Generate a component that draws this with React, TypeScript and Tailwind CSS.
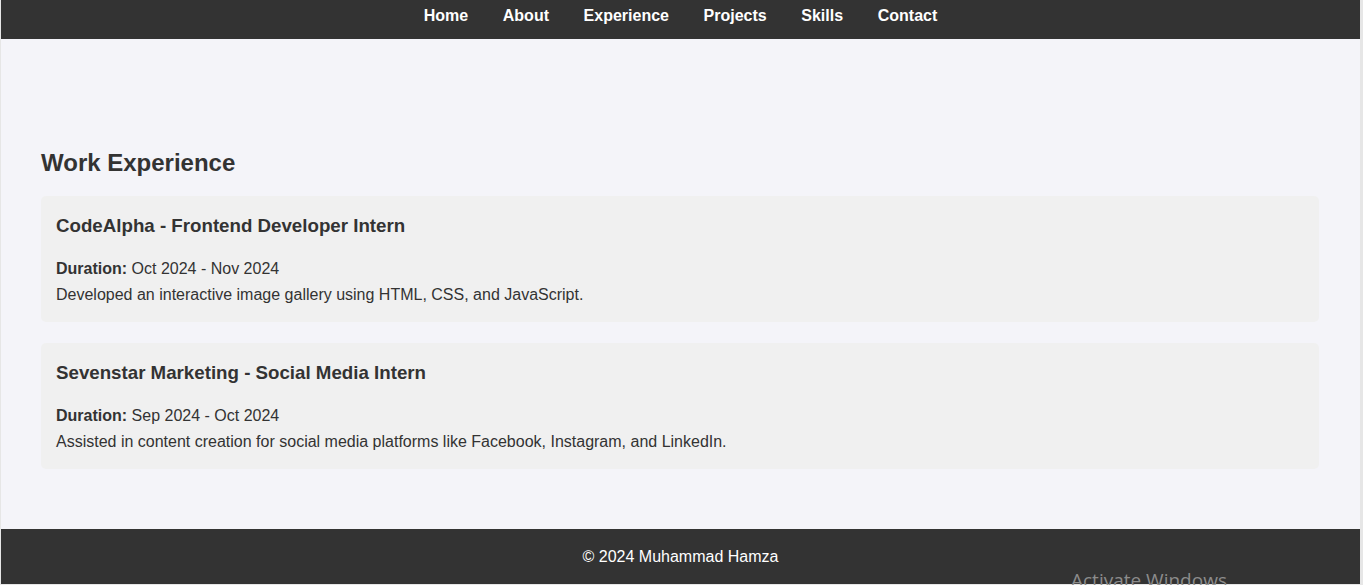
import React from "react";

const links = ["Home", "About", "Experience", "Projects", "Skills", "Contact"];

const jobs = [
  {
    title: "CodeAlpha - Frontend Developer Intern",
    duration: "Oct 2024 - Nov 2024",
    text: "Developed an interactive image gallery using HTML, CSS, and JavaScript.",
  },
  {
    title: "Sevenstar Marketing - Social Media Intern",
    duration: "Sep 2024 - Oct 2024",
    text: "Assisted in content creation for social media platforms like Facebook, Instagram, and LinkedIn.",
  },
];

const App = () => {
  return (
    <div className="w-[1363px] h-[585px] bg-[#e6e6e6] overflow-hidden font-['Liberation_Sans',Arial,sans-serif] text-[#333]">
      <div className="relative ml-[1px] w-[1359px] h-[584px] bg-[#f4f4f9] flex flex-col">
        {/* nav */}
        <nav className="h-[39px] bg-[#333] flex justify-center items-center gap-[34.6px] pb-[7px]">
          {links.map((l) => (
            <a key={l} href="#" className="text-white font-bold text-[16px] leading-[18px]">
              {l}
            </a>
          ))}
        </nav>

        {/* experience */}
        <section className="flex-1 pl-[40px] pr-[41px] pt-[110px]">
          <h2 className="text-[24px] leading-[28px] font-bold mb-[19px]">Work Experience</h2>
          <div className="flex flex-col gap-[21px]">
            {jobs.map((j) => (
              <div key={j.title} className="bg-[#f0f0f0] rounded-[5px] px-[15px] pt-[16px] pb-[14px]">
                <h3 className="text-[18.72px] leading-[28px] font-bold mb-[16px]">{j.title}</h3>
                <p className="text-[16px] leading-[26px]">
                  <span className="font-bold">Duration:</span> {j.duration}
                </p>
                <p className="text-[16px] leading-[26px]">{j.text}</p>
              </div>
            ))}
          </div>
        </section>

        {/* footer */}
        <footer className="h-[55px] bg-[#333] flex items-center justify-center">
          <p className="text-white text-[16px] leading-[18px]">© 2024 Muhammad Hamza</p>
        </footer>

        {/* os watermark */}
        <span className="absolute left-[1070px] top-[566px] text-[19px] leading-[28px] text-[#8c8c8c] font-['Open_Sans',sans-serif]">
          Activate Windows
        </span>
      </div>
    </div>
  );
};

export default App;
